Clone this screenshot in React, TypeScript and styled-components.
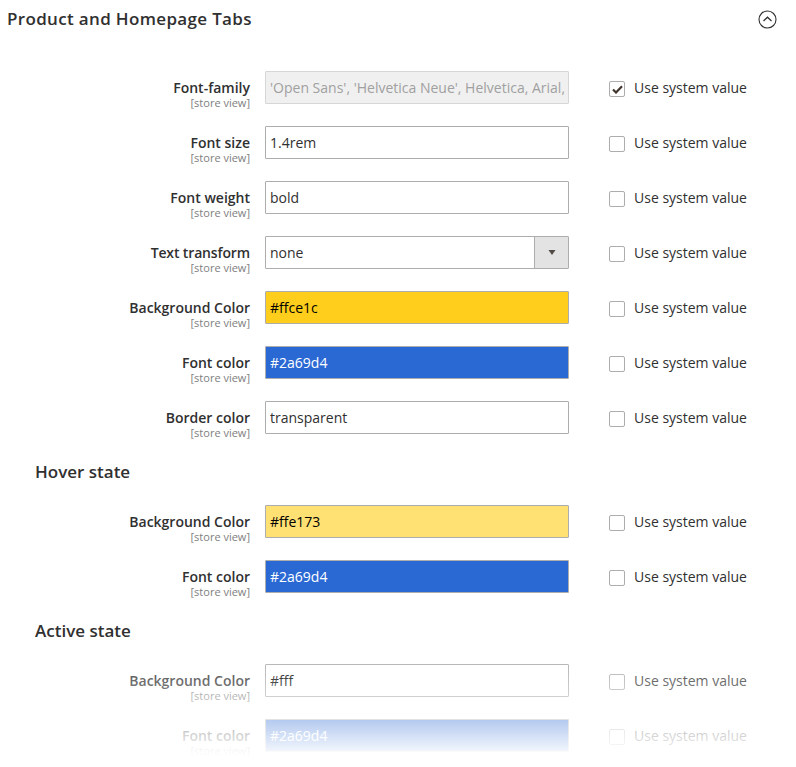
import React from "react";
import styled, { createGlobalStyle } from "styled-components";

const Global = createGlobalStyle`
  html, body { margin: 0; padding: 0; background: #fff; }
  body { font-family: "Open Sans", "Liberation Sans", sans-serif; color: #303030; }
`;

const Page = styled.div`
  position: relative;
  width: 796px;
  height: 767px;
  overflow: hidden;
  box-sizing: border-box;
  padding: 8px 0 0 7px;
`;

const Header = styled.div`
  display: flex;
  align-items: center;
  justify-content: space-between;
  height: 22px;
  padding-right: 19px;
  margin-bottom: 41px;
`;

const Title = styled.h2`
  margin: 0;
  font-size: 17px;
  line-height: 22px;
  font-weight: 600;
  letter-spacing: 0.34px;
  color: #303030;
`;

const Rows = styled.div`
  display: flex;
  flex-direction: column;
  gap: 22px;
`;

const Row = styled.div`
  display: grid;
  grid-template-columns: 243px 304px auto;
  column-gap: 15px;
  align-items: start;
  height: 33px;
`;

const LabelCol = styled.div`
  text-align: right;
  padding-top: 7px;
`;

const LabelText = styled.div<{ $tight?: boolean }>`
  font-size: 14px;
  line-height: 19px;
  font-weight: 600;
  color: #303030;
  letter-spacing: ${(p) => (p.$tight ? "-0.14px" : "normal")};
`;

const Scope = styled.div`
  font-size: 11px;
  line-height: 11px;
  color: #808080;
`;

const Field = styled.input<{ $bg?: string; $fg?: string }>`
  box-sizing: border-box;
  display: block;
  width: 304px;
  height: 33px;
  margin: 0;
  padding: 0 4px;
  outline: none;
  font-family: inherit;
  font-size: 14px;
  border: 1px solid #adadad;
  border-radius: 1px;
  background: ${(p) => p.$bg ?? "#fff"};
  color: ${(p) => p.$fg ?? "#303030"};

  &:disabled {
    border-color: #d6d6d6;
    background: #f0f0f0;
    color: #a0a0a0;
    opacity: 1;
    -webkit-text-fill-color: #a0a0a0;
  }
`;

const SelectBox = styled.div`
  box-sizing: border-box;
  height: 33px;
  display: flex;
  align-items: stretch;
  border: 1px solid #adadad;
  border-radius: 1px;
  font-size: 14px;
  color: #303030;
`;

const SelectValue = styled.div`
  flex: 1;
  display: flex;
  align-items: center;
  padding: 0 4px;
`;

const SelectButton = styled.div`
  width: 33px;
  background: #e3e3e3;
  border-left: 1px solid #adadad;
  display: flex;
  align-items: center;
  justify-content: center;
`;

const Inherit = styled.div`
  display: flex;
  align-items: center;
  gap: 9px;
  height: 33px;
  margin-left: 25px;
  font-size: 14px;
  color: #303030;
`;

const Check = styled.span`
  box-sizing: border-box;
  width: 16px;
  height: 16px;
  margin-top: 3px;
  border: 1px solid #adadad;
  border-radius: 2px;
  background: #fff;
  display: flex;
  align-items: center;
  justify-content: center;
`;

const Subheading = styled.h3<{ $top: number }>`
  margin: ${(p) => p.$top}px 0 22px 28px;
  font-size: 17px;
  line-height: 22px;
  font-weight: 600;
  color: #303030;
`;

const Fade = styled.div`
  position: absolute;
  left: 0;
  right: 0;
  top: 650px;
  bottom: 0;
  background: linear-gradient(
    to bottom,
    rgba(255, 255, 255, 0) 0,
    rgba(255, 255, 255, 1) 108px
  );
  pointer-events: none;
`;

type FieldSpec = {
  label: string;
  value: string;
  bg?: string;
  fg?: string;
  disabled?: boolean;
  select?: boolean;
  checked?: boolean;
  tight?: boolean;
};

const SettingRow = ({ label, value, bg, fg, disabled, select, checked, tight }: FieldSpec) => (
  <Row>
    <LabelCol>
      <LabelText $tight={tight}>{label}</LabelText>
      <Scope>[store view]</Scope>
    </LabelCol>
    {select ? (
      <SelectBox>
        <SelectValue>{value}</SelectValue>
        <SelectButton>
          <svg width="8" height="5" viewBox="0 0 8 5">
            <polygon points="0.5,0 7.5,0 4,5" fill="#514943" />
          </svg>
        </SelectButton>
      </SelectBox>
    ) : (
      <Field $bg={bg} $fg={fg} disabled={disabled} value={value} readOnly />
    )}
    <Inherit>
      <Check>
        {checked && (
          <svg width="11" height="9" viewBox="0 0 11 9">
            <path d="M1 4.5 L4 7.5 L10 1.2" fill="none" stroke="#41362f" strokeWidth="2.2" />
          </svg>
        )}
      </Check>
      Use system value
    </Inherit>
  </Row>
);

const blue = { bg: "#2a69d4", fg: "#fff" };

const main: FieldSpec[] = [
  { label: "Font-family", value: "'Open Sans', 'Helvetica Neue', Helvetica, Arial, sans-serif", disabled: true, checked: true },
  { label: "Font size", value: "1.4rem" },
  { label: "Font weight", value: "bold" },
  { label: "Text transform", value: "none", select: true, tight: true },
  { label: "Background Color", value: "#ffce1c", bg: "#ffce1c", fg: "#000" },
  { label: "Font color", value: "#2a69d4", ...blue },
  { label: "Border color", value: "transparent" },
];

const hover: FieldSpec[] = [
  { label: "Background Color", value: "#ffe173", bg: "#ffe173", fg: "#000" },
  { label: "Font color", value: "#2a69d4", ...blue },
];

const active: FieldSpec[] = [
  { label: "Background Color", value: "#fff", fg: "#000" },
  { label: "Font color", value: "#2a69d4", ...blue },
];

export default function App() {
  return (
    <Page>
      <Global />
      <Header>
        <Title>Product and Homepage Tabs</Title>
        <svg width="19" height="19" viewBox="0 0 19 19">
          <circle cx="9.5" cy="9.5" r="8.5" fill="none" stroke="#303030" strokeWidth="1.1" />
          <path d="M5.5 11 L9.5 7.2 L13.5 11" fill="none" stroke="#303030" strokeWidth="1.2" />
        </svg>
      </Header>
      <Rows>
        {main.map((f) => (
          <SettingRow key={f.label} {...f} />
        ))}
      </Rows>
      <Subheading $top={27}>Hover state</Subheading>
      <Rows>
        {hover.map((f) => (
          <SettingRow key={f.label} {...f} />
        ))}
      </Rows>
      <Subheading $top={27}>Active state</Subheading>
      <Rows>
        {active.map((f) => (
          <SettingRow key={f.label} {...f} />
        ))}
      </Rows>
      <Fade />
    </Page>
  );
}
